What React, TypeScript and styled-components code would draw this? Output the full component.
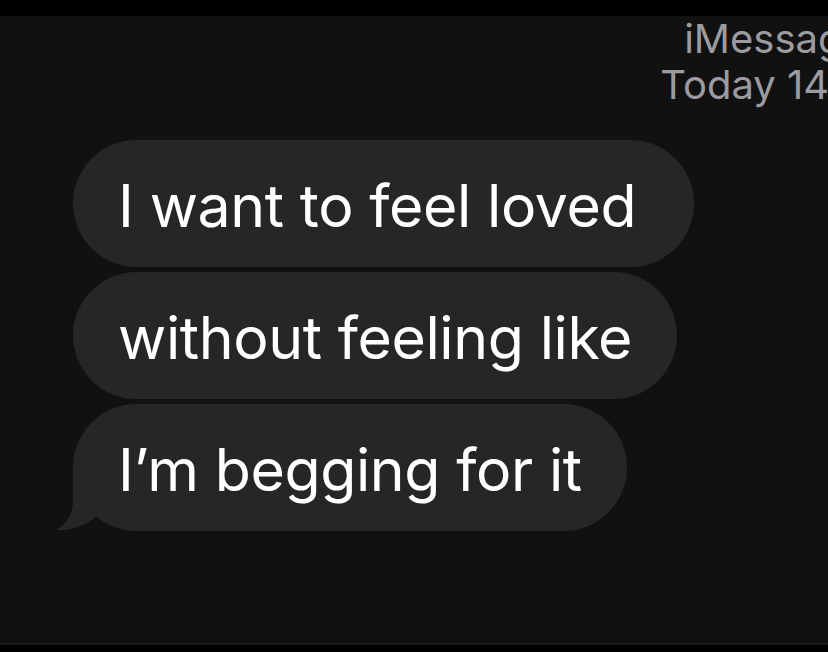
import React from "react";
import styled, { createGlobalStyle } from "styled-components";

const GlobalStyle = createGlobalStyle`
  html, body {
    margin: 0;
    padding: 0;
    background: #000;
  }
  * { box-sizing: border-box; }
`;

const Screen = styled.div`
  width: 828px;
  height: 652px;
  display: flex;
  flex-direction: column;
  background: #000;
  overflow: hidden;
  font-family: Inter, "Noto Sans", "Liberation Sans", sans-serif;
`;

const TopBar = styled.div`
  height: 16px;
  flex: none;
  background: #000;
`;

const Thread = styled.main`
  flex: 1;
  display: flex;
  flex-direction: column;
  background: #111111;
  overflow: hidden;
  border-bottom: 2px solid #1a1a1a;
`;

const BottomBar = styled.div`
  height: 7px;
  flex: none;
  background: #000;
`;

const HeaderRow = styled.header`
  display: flex;
  justify-content: flex-end;
  margin-right: -72px;
  padding-top: 0;
`;

const Header = styled.div`
  width: 250px;
  display: flex;
  flex-direction: column;
  align-items: center;
  color: #9b9ba0;
  font-size: 40px;
  line-height: 46px;
  white-space: nowrap;
`;

const HeaderLine = styled.span`
  display: block;
`;

const Messages = styled.section`
  display: flex;
  flex-direction: column;
  align-items: flex-start;
  gap: 5px;
  padding-left: 73px;
  margin-top: 32px;
`;

const Bubble = styled.div<{ $padRight?: number }>`
  position: relative;
  height: 127px;
  display: inline-flex;
  align-items: center;
  padding: 4px ${(p) => p.$padRight ?? 45}px 0 45px;
  border-radius: 64px;
  background: #262628;
  color: #ffffff;
  font-size: 59px;
  letter-spacing: -0.4px;
  white-space: nowrap;
`;

const Tail = styled.svg`
  position: absolute;
  left: -18px;
  bottom: 0;
  width: 56px;
  height: 63px;
`;

export default function App() {
  return (
    <>
      <GlobalStyle />
      <Screen>
        <TopBar />
        <Thread>
          <HeaderRow>
            <Header>
              <HeaderLine>iMessage</HeaderLine>
              <HeaderLine>Today 14:32</HeaderLine>
            </Header>
          </HeaderRow>
          <Messages>
            <Bubble $padRight={58}>I want to feel loved</Bubble>
            <Bubble>without feeling like</Bubble>
            <Bubble>
              I’m begging for it
              <Tail viewBox="0 0 56 63" aria-hidden="true">
                <path
                  d="M18 0 L18 32 C18 47 10 58 0 62 C15 63 30 58 40 50 L55 2 Z"
                  fill="#262628"
                />
              </Tail>
            </Bubble>
          </Messages>
        </Thread>
        <BottomBar />
      </Screen>
    </>
  );
}
